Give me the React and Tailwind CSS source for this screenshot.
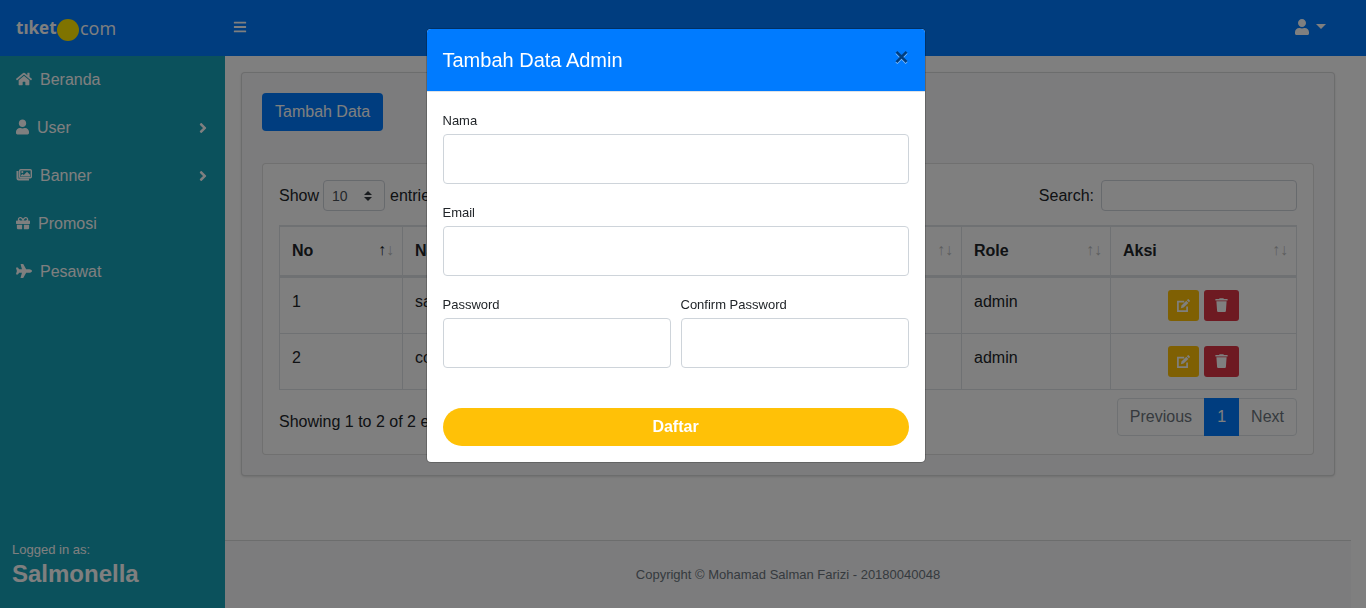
import React from "react";
import { FaHome, FaUser, FaGift, FaPlane, FaAngleRight, FaBars } from "react-icons/fa";

function ImagesIcon({ className }) {
  return (
    <svg viewBox="0 0 16 16" className={className} aria-hidden="true">
      <path d="M1.5 4v7.4q0 1.1 1.1 1.1H13" fill="none" stroke="currentColor" strokeWidth="2" />
      <rect x="3.7" y="2.7" width="11.6" height="8" rx="1" fill="none" stroke="currentColor" strokeWidth="1.4" />
      <circle cx="6.3" cy="5.1" r="1.1" fill="currentColor" />
      <path d="M5 9.6V8.3l1.4-1.4 1.4 1.2L11 4.7l3 3v1.9z" fill="currentColor" />
    </svg>
  );
}

const menu = [
  { label: "Beranda", Icon: FaHome, size: "w-4" },
  { label: "User", Icon: FaUser, size: "w-[13px]", nested: true },
  { label: "Banner", Icon: ImagesIcon, size: "w-4", nested: true },
  { label: "Promosi", Icon: FaGift, size: "w-[14px]" },
  { label: "Pesawat", Icon: FaPlane, size: "w-4" },
];

const columns = [
  { label: "No", width: "w-[123px]", sorted: true },
  { label: "Nama", width: "" },
  { label: "Email", width: "" },
  { label: "Role", width: "w-[149px]" },
  { label: "Aksi", width: "w-[186px]" },
];

const rows = [
  { no: 1, name: "salman", email: "salman@gmail.com", role: "admin" },
  { no: 2, name: "coba", email: "coba@gmail.com", role: "admin" },
];

function Logo() {
  return (
    <a href="#" aria-label="tiket.com" className="flex w-[225px] shrink-0 items-center px-4 pt-1 text-lg leading-7 text-white [font-family:'Open_Sans',sans-serif]">
      <span className="w-[41px] pb-1 text-[17px] font-bold">tıket</span>
      <span className="h-[22px] w-[22px] rounded-full bg-[#ffe600]" />
      <span className="ml-px pb-1">com</span>
    </a>
  );
}

function EditIcon() {
  return (
    <svg viewBox="0 0 13 13" className="h-[13px] w-[13px]" aria-hidden="true">
      <path d="M7.2 2.7H.9v9.4h9.2V7.6" fill="none" stroke="#fff" strokeWidth="1.7" />
      <path d="M3.9 9.3l.6-2.8L9.3 1.8l2.1 2.1-4.8 4.7z" fill="#fff" />
      <path d="M9.9 1.2l.9-.9q.4-.4.8 0l1.2 1.2q.4.4 0 .8l-.9.9z" fill="#fff" />
    </svg>
  );
}

function TrashIcon() {
  return (
    <svg viewBox="0 0 13 15" className="h-[15px] w-[13px]" aria-hidden="true">
      <path d="M.4 1h3.7l.5-.8h3.8l.5.8h3.7v1.5H.4zM1.4 3.3h10.2l-.7 9.7q-.1 1-1 1H3.1q-.9 0-1-1z" fill="#fff" />
    </svg>
  );
}

function Field({ id, label, type = "text" }) {
  return (
    <div className="mb-4 min-w-0 flex-1">
      <label htmlFor={id} className="block text-[13px] leading-[26px]">{label}</label>
      <input id={id} type={type} className="block h-[50px] w-full rounded border border-[#ced4da] bg-white px-3 text-base text-[#495057]" />
    </div>
  );
}

function Modal() {
  return (
    <div className="fixed inset-0 overflow-hidden bg-black/50 pr-[15px]">
      <div role="dialog" aria-modal="true" aria-labelledby="modal-title" className="mx-auto mt-7 max-w-[500px] overflow-hidden rounded-[5px] border border-black/20 bg-white bg-clip-padding">
        <div className="flex items-start justify-between border-b border-[#dee2e6] bg-[#007bff] p-4">
          <h5 id="modal-title" className="text-xl leading-[30px] text-white">Tambah Data Admin</h5>
          <button type="button" aria-label="Close" className="text-2xl leading-6 font-bold text-black opacity-50 [text-shadow:0_1px_0_#fff]">×</button>
        </div>
        <form className="p-4">
          <Field id="nama" label="Nama" />
          <Field id="email" label="Email" type="email" />
          <div className="flex gap-2.5">
            <Field id="password" label="Password" type="password" />
            <Field id="confirm" label="Confirm Password" type="password" />
          </div>
          <button type="button" className="mt-6 block h-[38px] w-full rounded-full bg-[#ffc107] font-bold text-white">Daftar</button>
        </form>
      </div>
    </div>
  );
}

function Sidebar() {
  return (
    <aside className="flex w-[225px] shrink-0 flex-col justify-between bg-[#17a2b8] text-white">
      <nav>
        {menu.map(({ label, Icon, size, nested }) => (
          <a key={label} href="#" className="flex h-12 items-center gap-2 px-4">
            <Icon className={`mb-0.5 h-4 ${size}`} />
            {label}
            {nested && <FaAngleRight className="ml-auto h-4 w-3" />}
          </a>
        ))}
      </nav>
      <div className="px-3 pt-3 pb-5">
        <div className="text-[13px] leading-5">Logged in as:</div>
        <div className="text-2xl leading-7 font-bold">Salmonella</div>
      </div>
    </aside>
  );
}

function DataTable() {
  return (
    <table className="mt-3.5 w-full table-fixed border-separate border-spacing-0 border-t border-l border-[#dee2e6]">
      <thead>
        <tr>
          {columns.map(({ label, width, sorted }) => (
            <th key={label} className={`border-t border-r border-b-3 border-[#dee2e6] py-3 pr-2 pl-3 text-left font-bold ${width}`}>
              <div className="flex items-start justify-between">
                <span>{label}</span>
                <span className="leading-[22px] font-normal" aria-hidden="true">
                  <span className={sorted ? "" : "opacity-30"}>↑</span>
                  <span className="opacity-30">↓</span>
                </span>
              </div>
            </th>
          ))}
        </tr>
      </thead>
      <tbody>
        {rows.map((row) => (
          <tr key={row.no} className="[&>td]:border-r [&>td]:border-b [&>td]:border-[#dee2e6] [&>td]:p-3 [&>td]:align-top">
            <td>{row.no}</td>
            <td>{row.name}</td>
            <td>{row.email}</td>
            <td>{row.role}</td>
            <td>
              <div className="flex justify-center gap-[5px]">
                <button type="button" aria-label="Edit" className="flex h-[31px] w-[31px] items-center justify-center rounded-[3px] bg-[#ffc107]"><EditIcon /></button>
                <button type="button" aria-label="Hapus" className="flex h-[31px] w-[35px] items-center justify-center rounded-[3px] bg-[#dc3545]"><TrashIcon /></button>
              </div>
            </td>
          </tr>
        ))}
      </tbody>
    </table>
  );
}

export default function App() {
  return (
    <div className="flex min-h-screen flex-col bg-white text-base text-[#212529] [font-family:'Liberation_Sans',Arial,sans-serif]">
      <header className="flex h-14 items-stretch bg-[#007bff] text-white">
        <Logo />
        <button type="button" aria-label="Menu" className="px-2 pb-0.5"><FaBars className="h-[14px] w-[14px]" /></button>
        <button type="button" aria-label="Akun" className="mr-10 ml-auto flex items-center gap-[7px] pb-0.5">
          <FaUser className="h-4 w-[14px]" />
          <svg viewBox="0 0 10 5" className="mb-0.5 h-[5px] w-[10px]" aria-hidden="true"><path d="M0 0h10L5 5z" fill="currentColor" /></svg>
        </button>
      </header>

      <div className="flex flex-1">
        <Sidebar />
        <div className="flex min-w-0 flex-1 flex-col justify-between pr-[15px]">
          <main className="p-4">
            <section className="rounded border border-black/12 bg-[#f8f9fa] p-5 shadow-sm">
              <button type="button" className="h-[38px] rounded bg-[#007bff] px-[13px] text-white">Tambah Data</button>
              <div className="mt-8 rounded border border-black/12 bg-white p-4">
                <div className="flex items-center justify-between">
                  <label className="flex items-center gap-1">
                    Show
                    <span className="relative mr-px">
                      <select className="block h-[31px] w-[62px] appearance-none rounded border border-[#ced4da] bg-white pl-2 text-sm text-[#495057]">
                        <option>10</option>
                      </select>
                      <svg viewBox="0 0 8 10" className="pointer-events-none absolute top-[11px] right-[13px] h-[10px] w-2" aria-hidden="true"><path d="M4 0L0 4h8zM4 10L0 6h8z" fill="#343a40" /></svg>
                    </span>
                    entries
                  </label>
                  <label className="flex items-center gap-[7px]">
                    Search:
                    <input type="search" className="h-[31px] w-[196px] rounded border border-[#ced4da] bg-white px-2 text-sm" />
                  </label>
                </div>
                <DataTable />
                <div className="flex items-center justify-between pt-2 pb-0.5">
                  <p className="pt-2.5">Showing 1 to 2 of 2 entries</p>
                  <nav className="flex h-[38px] rounded border border-[#dee2e6] text-[#6c757d]" aria-label="Halaman">
                    <button type="button" className="px-3">Previous</button>
                    <button type="button" className="-my-px w-[35px] bg-[#007bff] text-white">1</button>
                    <button type="button" className="px-3">Next</button>
                  </nav>
                </div>
              </div>
            </section>
          </main>
          <footer className="border-t border-black/12 bg-[#f8f9fa] py-6 text-center text-[13px] leading-[19px] text-[#6c757d]">
            Copyright © Mohamad Salman Farizi - 20180040048
          </footer>
        </div>
      </div>
      <Modal />
    </div>
  );
}
